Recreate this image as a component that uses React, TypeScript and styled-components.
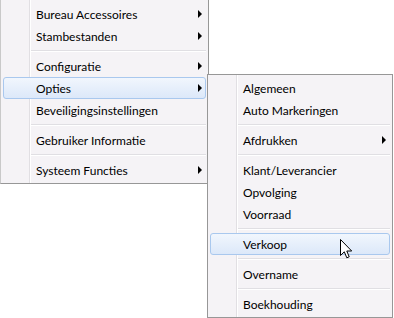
import React from "react";
import styled, { createGlobalStyle } from "styled-components";

const GlobalStyle = createGlobalStyle`
  html, body { margin: 0; padding: 0; background: #ffffff; }
  body {
    font-family: Lato, "Noto Sans", "Liberation Sans", sans-serif;
    font-size: 12px;
    color: #000;
  }
`;

const Desktop = styled.div`
  position: relative;
  width: 394px;
  height: 318px;
  overflow: hidden;
  background: #ffffff;
`;

const Menu = styled.div<{ $width: number }>`
  position: relative;
  box-sizing: border-box;
  width: ${(p) => p.$width}px;
  border: 1px solid #979797;
  padding: 2px;
  background: #f5f3f6;
  &::before {
    content: "";
    position: absolute;
    top: 0;
    bottom: 0;
    left: 28px;
    width: 1px;
    background: #e1dfe3;
  }
  &::after {
    content: "";
    position: absolute;
    top: 0;
    bottom: 0;
    left: 29px;
    width: 1px;
    background: #ffffff;
  }
`;

const MainMenu = styled(Menu)`
  margin-top: -1px;
  padding-top: 3px;
  border-left-color: #c9c9c9;
`;

const SubMenu = styled(Menu)`
  position: absolute;
  left: 207px;
  top: 74px;
  z-index: 2;
`;

const Item = styled.div<{ $active?: boolean }>`
  position: relative;
  z-index: 1;
  box-sizing: border-box;
  height: 22px;
  display: flex;
  align-items: center;
  padding-left: 32px;
  white-space: nowrap;
  border: 1px solid ${(p) => (p.$active ? "#a9c8ee" : "transparent")};
  border-radius: 3px;
  background: ${(p) =>
    p.$active ? "linear-gradient(#f1f6fd, #dce8f9)" : "transparent"};
`;

const Arrow = styled.span`
  position: absolute;
  right: 3px;
  top: 50%;
  margin-top: -4px;
  width: 0;
  height: 0;
  border-top: 4px solid transparent;
  border-bottom: 4px solid transparent;
  border-left: 4px solid #000;
`;

const Separator = styled.div`
  position: relative;
  z-index: 1;
  height: 8px;
  margin-left: 28px;
  &::before {
    content: "";
    position: absolute;
    left: 0;
    right: 0;
    top: 3px;
    height: 1px;
    background: #e0dfe3;
  }
  &::after {
    content: "";
    position: absolute;
    left: 0;
    right: 0;
    top: 4px;
    height: 1px;
    background: #ffffff;
  }
`;

const Cursor = styled.svg`
  position: absolute;
  left: 340px;
  top: 239px;
  z-index: 5;
`;

type Entry = { label?: string; sub?: boolean; active?: boolean; sep?: boolean };

const mainEntries: Entry[] = [
  { label: "Bureau Accessoires", sub: true },
  { label: "Stambestanden", sub: true },
  { sep: true },
  { label: "Configuratie", sub: true },
  { label: "Opties", sub: true, active: true },
  { label: "Beveiligingsinstellingen" },
  { sep: true },
  { label: "Gebruiker Informatie" },
  { sep: true },
  { label: "Systeem Functies", sub: true },
];

const subEntries: Entry[] = [
  { label: "Algemeen" },
  { label: "Auto Markeringen" },
  { sep: true },
  { label: "Afdrukken", sub: true },
  { sep: true },
  { label: "Klant/Leverancier" },
  { label: "Opvolging" },
  { label: "Voorraad" },
  { sep: true },
  { label: "Verkoop", active: true },
  { sep: true },
  { label: "Overname" },
  { sep: true },
  { label: "Boekhouding" },
];

const renderEntries = (entries: Entry[]) =>
  entries.map((e, i) =>
    e.sep ? (
      <Separator key={i} />
    ) : (
      <Item key={i} $active={e.active}>
        {e.label}
        {e.sub && <Arrow />}
      </Item>
    )
  );

export default function App() {
  return (
    <>
      <GlobalStyle />
      <Desktop>
        <MainMenu $width={209}>{renderEntries(mainEntries)}</MainMenu>
        <SubMenu $width={186}>{renderEntries(subEntries)}</SubMenu>
        <Cursor width="13" height="21" viewBox="0 0 13 21">
          <path
            d="M0.5 0.5 L0.5 16.5 L4.3 12.8 L6.8 18.8 L9.2 17.8 L6.8 12 L11.7 12 Z"
            fill="#ffffff"
            stroke="#000000"
            strokeWidth="1"
            strokeLinejoin="miter"
          />
        </Cursor>
      </Desktop>
    </>
  );
}
